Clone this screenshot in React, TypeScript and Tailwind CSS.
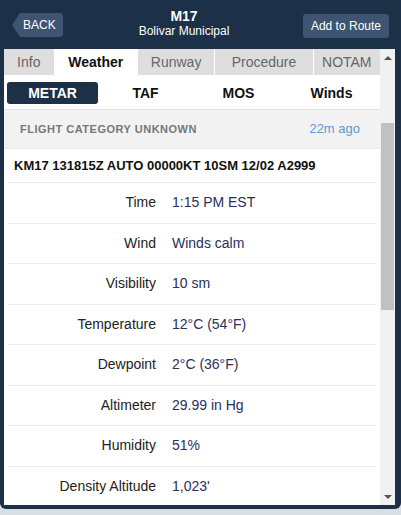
import React from 'react';

const rows: [string, string][] = [
  ['Time', '1:15 PM EST'],
  ['Wind', 'Winds calm'],
  ['Visibility', '10 sm'],
  ['Temperature', '12°C (54°F)'],
  ['Dewpoint', '2°C (36°F)'],
  ['Altimeter', '29.99 in Hg'],
  ['Humidity', '51%'],
  ['Density Altitude', "1,023'"],
];

const tabs = ['Info', 'Weather', 'Runway', 'Procedure', 'NOTAM'];
const tabWidths = ['w-[50px]', 'w-[83px]', 'w-[77px]', 'w-[98px]', 'w-[67px]'];
const subTabs = ['METAR', 'TAF', 'MOS', 'Winds'];

export default function App() {
  return (
    <div className="w-[401px] h-[515px] bg-[#d9dee4] overflow-hidden font-['Liberation_Sans',Arial,sans-serif]">
      <div className="w-[401px] h-[509px] bg-[#1c3048] rounded-b-[6px] flex flex-col pl-[4px] pr-[6px] pb-[4px]">
        {/* Header */}
        <div className="h-[49px] flex items-center relative shrink-0">
          <button className="ml-[8px] h-[24px] flex items-center text-white text-[12px]">
            <span className="w-0 h-0 border-y-[12px] border-y-transparent border-r-[8px] border-r-[#3d5571]" />
            <span className="h-[24px] bg-[#3d5571] pl-[3px] pr-[7px] flex items-center rounded-r-[3px]">BACK</span>
          </button>
          <div className="absolute left-[110px] w-[140px] top-[9px] text-center text-white leading-none">
            <div className="font-bold text-[14px]">M17</div>
            <div className="text-[12px] mt-[2px]">Bolivar Municipal</div>
          </div>
          <button className="ml-auto mr-[6px] h-[24px] px-[8px] bg-[#3d5571] text-white text-[12px] rounded-[3px] mt-[2px]">
            Add to Route
          </button>
        </div>

        {/* Body */}
        <div className="flex-1 flex bg-white min-h-0 overflow-hidden">
          <div className="flex-1 min-w-0">
            {/* Tabs */}
            <div className="flex h-[26px] gap-[1px] bg-white">
              {tabs.map((t, i) =>
                t === 'Weather' ? (
                  <div key={t} className={`${tabWidths[i]} flex items-center justify-center bg-white text-[14px] font-bold text-[#111]`}>
                    {t}
                  </div>
                ) : (
                  <div key={t} className={`${tabWidths[i]} flex items-center justify-center bg-[#dedede] text-[14px] text-[#666]`}>
                    {t}
                  </div>
                )
              )}
            </div>

            {/* Sub tabs */}
            <div className="h-[35px] grid grid-cols-4 gap-x-[2px] px-[3px] pt-[7px] pb-[5px] border-b border-[#e3e3e3]">
              {subTabs.map((s) =>
                s === 'METAR' ? (
                  <div key={s} className="bg-[#1c3048] text-white font-bold text-[14px] rounded-[3px] flex items-center justify-center">
                    {s}
                  </div>
                ) : (
                  <div key={s} className="text-[#111] font-bold text-[14px] flex items-center justify-center">
                    {s}
                  </div>
                )
              )}
            </div>

            {/* Flight category */}
            <div className="h-[39px] bg-[#f2f2f2] flex items-center justify-between pl-[16px] pr-[20px] border-b border-[#e6e6e6]">
              <span className="text-[11px] font-bold text-[#777] tracking-[0.5px]">FLIGHT CATEGORY UNKNOWN</span>
              <span className="text-[13px] text-[#5a9bd3]">22m ago</span>
            </div>

            <div className="h-[33px] flex items-center pl-[10px] text-[13px] font-bold text-[#111]">
              KM17 131815Z AUTO 00000KT 10SM 12/02 A2999
            </div>

            <div className="px-[4px]">
              {rows.map(([label, value]) => (
                <div key={label} className="h-[40.5px] flex items-center border-t border-[#ececec] text-[14px]">
                  <span className="w-[148px] text-right text-[#222]">{label}</span>
                  <span className="ml-[16px] text-[#2c2e5c]">{value}</span>
                </div>
              ))}
            </div>
          </div>

          {/* Scrollbar */}
          <div className="w-[15px] bg-[#f1f1f1] flex flex-col items-center shrink-0">
            <div className="h-[17px] flex items-center justify-center">
              <span className="w-0 h-0 border-x-[4px] border-x-transparent border-b-[4px] border-b-[#555]" />
            </div>
            <div className="mt-[57px] w-[13px] h-[187px] bg-[#c1c1c1]" />
            <div className="mt-auto h-[17px] flex items-center justify-center">
              <span className="w-0 h-0 border-x-[4px] border-x-transparent border-t-[4px] border-t-[#555]" />
            </div>
          </div>
        </div>
      </div>
    </div>
  );
}
